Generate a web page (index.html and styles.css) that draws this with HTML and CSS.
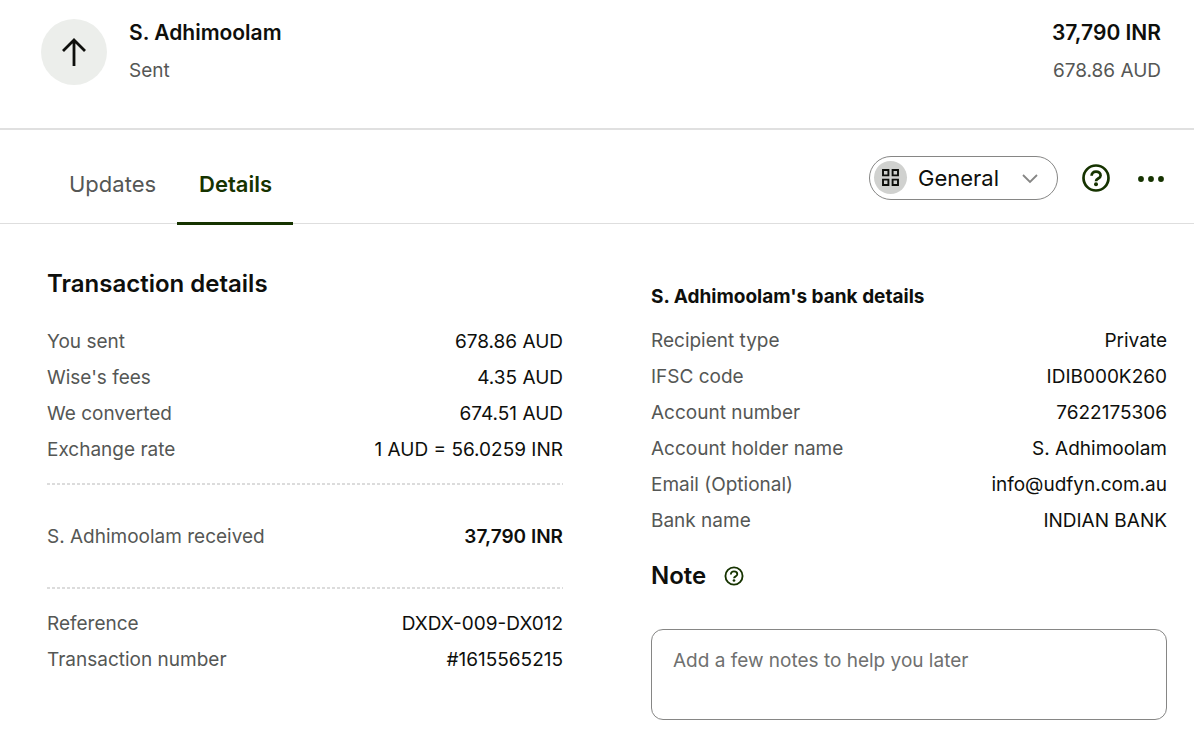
FILE: index.html
```html
<!DOCTYPE html>
<html lang="en">
<head>
    <meta charset="UTF-8">
    <meta name="viewport" content="width=device-width, initial-scale=1.0">
    <title>Transaction</title>
    <link rel="stylesheet" href="styles.css">
</head>
<body>
    <header class="summary">
        <div class="avatar">
            <svg width="24" height="28" viewBox="0 0 24 28" fill="none" stroke="currentColor" stroke-width="2.8">
                <path d="M12 28V2M1 13L12 2l11 11"/>
            </svg>
        </div>
        <div class="summary-text">
            <h1>S. Adhimoolam</h1>
            <p>Sent</p>
        </div>
        <div class="summary-text amount">
            <strong>37,790 INR</strong>
            <p>678.86 AUD</p>
        </div>
    </header>

    <div class="toolbar">
        <nav class="tabs">
            <a href="#updates" class="tab">Updates</a>
            <a href="#details" class="tab active">Details</a>
        </nav>
        <div class="actions">
            <div class="category">
                <span class="category-icon">
                    <svg width="17" height="17" viewBox="0 0 17 17" fill="none" stroke="currentColor" stroke-width="1.9">
                        <path d="M1 1h5.4v5.4H1zM10.6 1H16v5.4h-5.4zM1 10.6h5.4V16H1zM10.6 10.6H16V16h-5.4z"/>
                    </svg>
                </span>
                <select aria-label="Category">
                    <option>General</option>
                </select>
                <svg class="chevron" width="16" height="10" viewBox="0 0 16 10" fill="none" stroke="currentColor" stroke-width="1.8">
                    <path d="M1 1l7 7 7-7"/>
                </svg>
            </div>
            <button class="icon-button" aria-label="Help">
                <svg width="28" height="28" viewBox="0 0 28 28" fill="none" stroke="currentColor" stroke-width="2.7">
                    <circle cx="14" cy="14" r="12.5"/>
                    <path d="M9.6 11.8C9.6 9 11.4 7.6 14 7.6s4.6 1.5 4.6 3.9c0 3.2-4.6 2.8-4.6 5.8"/>
                    <circle cx="14" cy="20.3" r="2" fill="currentColor" stroke="none"/>
                </svg>
            </button>
            <button class="icon-button more" aria-label="More">
                <svg width="26" height="6" viewBox="0 0 26 6" fill="currentColor">
                    <circle cx="3" cy="3" r="2.9"/>
                    <circle cx="13" cy="3" r="2.9"/>
                    <circle cx="23" cy="3" r="2.9"/>
                </svg>
            </button>
        </div>
    </div>

    <main class="content">
        <section>
            <h2>Transaction details</h2>
            <dl class="rows">
                <div class="row"><dt>You sent</dt><dd>678.86 AUD</dd></div>
                <div class="row"><dt>Wise's fees</dt><dd>4.35 AUD</dd></div>
                <div class="row"><dt>We converted</dt><dd>674.51 AUD</dd></div>
                <div class="row"><dt>Exchange rate</dt><dd>1 AUD = 56.0259 INR</dd></div>
            </dl>
            <hr>
            <dl class="received">
                <div class="row"><dt>S. Adhimoolam received</dt><dd class="total">37,790 INR</dd></div>
            </dl>
            <hr>
            <dl class="reference">
                <div class="row"><dt>Reference</dt><dd>DXDX-009-DX012</dd></div>
                <div class="row"><dt>Transaction number</dt><dd>#1615565215</dd></div>
            </dl>
        </section>

        <section class="bank">
            <h3>S. Adhimoolam's bank details</h3>
            <dl>
                <div class="row"><dt>Recipient type</dt><dd>Private</dd></div>
                <div class="row"><dt>IFSC code</dt><dd>IDIB000K260</dd></div>
                <div class="row"><dt>Account number</dt><dd>7622175306</dd></div>
                <div class="row"><dt>Account holder name</dt><dd>S. Adhimoolam</dd></div>
                <div class="row"><dt>Email (Optional)</dt><dd>info@udfyn.com.au</dd></div>
                <div class="row"><dt>Bank name</dt><dd>INDIAN BANK</dd></div>
            </dl>
            <div class="note-title">
                <h2><label for="note">Note</label></h2>
                <button class="icon-button" aria-label="About notes">
                    <svg width="20" height="20" viewBox="0 0 28 28" fill="none" stroke="currentColor" stroke-width="2.6">
                        <circle cx="14" cy="14" r="12"/>
                        <path d="M9.6 11.8C9.6 9 11.4 7.6 14 7.6s4.6 1.5 4.6 3.9c0 3.2-4.6 2.8-4.6 5.8"/>
                        <circle cx="14" cy="20.3" r="1.9" fill="currentColor" stroke="none"/>
                    </svg>
                </button>
            </div>
            <textarea id="note" placeholder="Add a few notes to help you later"></textarea>
        </section>
    </main>
</body>
</html>
```
FILE: styles.css
```css
* {
    margin: 0;
    padding: 0;
    box-sizing: border-box;
}

body {
    font-family: Inter, "Liberation Sans", sans-serif;
    font-size: 19px;
    line-height: 36px;
    color: #0e0f0c;
    background-color: #fff;
}

svg {
    display: block;
}

/* Top summary */
.summary {
    display: flex;
    align-items: flex-start;
    padding: 14px 33px 39px 41px;
    border-bottom: 2px solid #e0e0e0;
}

.avatar {
    display: flex;
    align-items: center;
    justify-content: center;
    width: 66px;
    height: 66px;
    margin: 5px 22px 0 0;
    border-radius: 50%;
    background-color: #eceeeb;
}

.summary-text {
    color: #555755;
}

.summary-text h1,
.summary-text strong {
    display: block;
    margin-bottom: 1px;
    font-size: 21px;
    font-weight: 600;
    line-height: 38px;
    color: #0e0f0c;
}

.amount {
    margin-left: auto;
    text-align: right;
}

/* Tabs and actions */
.toolbar {
    display: flex;
    justify-content: space-between;
    padding: 0 30px 0 47px;
    border-bottom: 1px solid #dedede;
}

.tabs {
    display: flex;
    margin-bottom: -2px;
}

.tab {
    padding: 36px 21px 20px 22px;
    border-bottom: 3px solid transparent;
    font-size: 22px;
    color: #555755;
    text-decoration: none;
}

.tab.active {
    border-color: #163300;
    font-weight: 600;
    color: #163300;
}

.actions {
    display: flex;
    align-items: center;
    gap: 24px;
    padding-top: 2px;
}

.category {
    position: relative;
}

.category select {
    appearance: none;
    display: block;
    width: 189px;
    height: 44px;
    padding: 0 48px;
    border: 1px solid #868685;
    border-radius: 22px;
    background: none;
    font: inherit;
    font-size: 22px;
    color: #0e0f0c;
    cursor: pointer;
}

.category-icon {
    position: absolute;
    top: 5px;
    left: 5px;
    display: flex;
    align-items: center;
    justify-content: center;
    width: 33px;
    height: 33px;
    border-radius: 50%;
    background-color: #d0d1cf;
    pointer-events: none;
}

.chevron {
    position: absolute;
    top: 18px;
    right: 20px;
    color: #868685;
    pointer-events: none;
}

.icon-button {
    border: none;
    background: none;
    color: #163300;
    cursor: pointer;
}

.more {
    padding: 2px 0 0 4px;
}

/* Details */
.content {
    display: grid;
    grid-template-columns: 1fr 1fr;
    gap: 88px;
    padding: 44px 27px 19px 47px;
}

h2 {
    font-size: 24px;
    font-weight: 600;
    line-height: 32px;
}

h3 {
    margin-bottom: 10px;
    font-size: 19px;
    font-weight: 700;
    line-height: 32px;
}

.row {
    display: flex;
    justify-content: space-between;
}

dt {
    color: #555755;
}

.rows {
    margin: 24px 0 15px;
}

/* Dashed divider */
hr {
    height: 2px;
    border: none;
    background: repeating-linear-gradient(to right, #dcdcdc 0 3px, transparent 3px 5px);
}

.received {
    padding: 34px 0 32px;
}

.reference {
    margin-top: 17px;
}

.total {
    font-weight: 600;
}

.bank {
    padding-top: 13px;
}

.note-title {
    display: flex;
    align-items: center;
    gap: 18px;
    margin: 21px 0 37px;
}

textarea {
    display: block;
    width: 100%;
    height: 91px;
    padding: 13px 21px;
    border: 1px solid #868685;
    border-radius: 12px;
    font: inherit;
    color: #0e0f0c;
    resize: none;
}

textarea::placeholder {
    color: #6f706f;
}
```
